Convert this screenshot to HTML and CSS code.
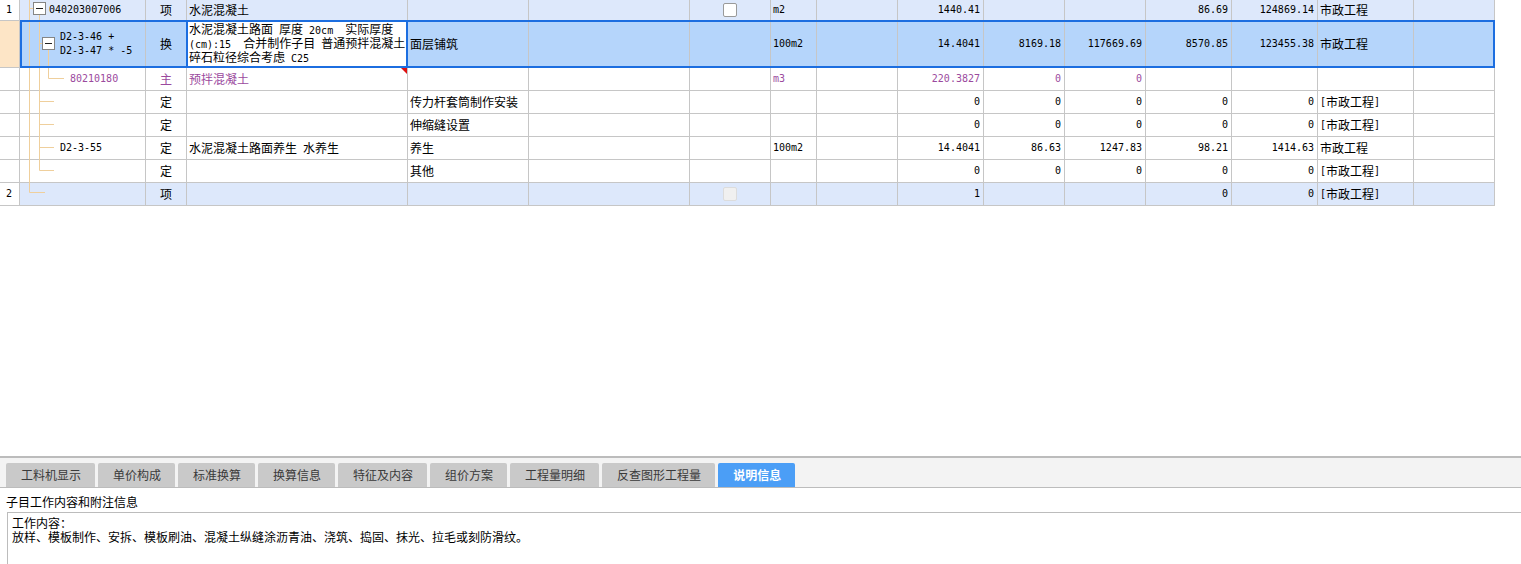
FILE: index.html
```html
<!DOCTYPE html>
<html lang="zh-CN">
<head>
<meta charset="utf-8">
<title>分部分项</title>
<link rel="stylesheet" href="styles.css">
</head>
<body>
<div class="grid-area">
  <div class="sheet">
    <div class="row first item">
      <div class="c no m">1</div>
      <div class="c tr t0"><span class="m">040203007006</span></div>
      <div class="c ctr">项</div>
      <div class="c">水泥混凝土</div>
      <div class="c"></div>
      <div class="c"></div>
      <div class="c ctr"><span class="chk"></span></div>
      <div class="c m">m2</div>
      <div class="c"></div>
      <div class="c r m">1440.41</div>
      <div class="c"></div>
      <div class="c"></div>
      <div class="c r m">86.69</div>
      <div class="c r m">124869.14</div>
      <div class="c">市政工程</div>
      <div class="c"></div>
    </div>
    <div class="row sel">
      <div class="c no"></div>
      <div class="c tr t1"><span class="m">D2-3-46 +<br>D2-3-47 * -5</span></div>
      <div class="c ctr">换</div>
      <div class="c edit"><span class="ml">水泥混凝土路面<span class="m"> </span>厚度<span class="m"> 20cm  </span>实际厚度<br><span class="m">(cm):15  </span>合并制作子目<span class="m"> </span>普通预拌混凝土<br>碎石粒径综合考虑<span class="m"> C25</span></span></div>
      <div class="c">面层铺筑</div>
      <div class="c"></div>
      <div class="c"></div>
      <div class="c m">100m2</div>
      <div class="c"></div>
      <div class="c r m">14.4041</div>
      <div class="c r m">8169.18</div>
      <div class="c r m">117669.69</div>
      <div class="c r m">8570.85</div>
      <div class="c r m">123455.38</div>
      <div class="c">市政工程</div>
      <div class="c"></div>
    </div>
    <div class="row pur">
      <div class="c no"></div>
      <div class="c tr t2"><span class="m">80210180</span></div>
      <div class="c ctr">主</div>
      <div class="c note">预拌混凝土</div>
      <div class="c"></div>
      <div class="c"></div>
      <div class="c"></div>
      <div class="c m">m3</div>
      <div class="c"></div>
      <div class="c r m">220.3827</div>
      <div class="c r m">0</div>
      <div class="c r m">0</div>
      <div class="c"></div>
      <div class="c"></div>
      <div class="c"></div>
      <div class="c"></div>
    </div>
    <div class="row">
      <div class="c no"></div>
      <div class="c tr"></div>
      <div class="c ctr">定</div>
      <div class="c"></div>
      <div class="c">传力杆套筒制作安装</div>
      <div class="c"></div>
      <div class="c"></div>
      <div class="c"></div>
      <div class="c"></div>
      <div class="c r m">0</div>
      <div class="c r m">0</div>
      <div class="c r m">0</div>
      <div class="c r m">0</div>
      <div class="c r m">0</div>
      <div class="c"><span class="m">[</span>市政工程<span class="m">]</span></div>
      <div class="c"></div>
    </div>
    <div class="row">
      <div class="c no"></div>
      <div class="c tr"></div>
      <div class="c ctr">定</div>
      <div class="c"></div>
      <div class="c">伸缩缝设置</div>
      <div class="c"></div>
      <div class="c"></div>
      <div class="c"></div>
      <div class="c"></div>
      <div class="c r m">0</div>
      <div class="c r m">0</div>
      <div class="c r m">0</div>
      <div class="c r m">0</div>
      <div class="c r m">0</div>
      <div class="c"><span class="m">[</span>市政工程<span class="m">]</span></div>
      <div class="c"></div>
    </div>
    <div class="row">
      <div class="c no"></div>
      <div class="c tr t1"><span class="m">D2-3-55</span></div>
      <div class="c ctr">定</div>
      <div class="c">水泥混凝土路面养生<span class="m"> </span>水养生</div>
      <div class="c">养生</div>
      <div class="c"></div>
      <div class="c"></div>
      <div class="c m">100m2</div>
      <div class="c"></div>
      <div class="c r m">14.4041</div>
      <div class="c r m">86.63</div>
      <div class="c r m">1247.83</div>
      <div class="c r m">98.21</div>
      <div class="c r m">1414.63</div>
      <div class="c">市政工程</div>
      <div class="c"></div>
    </div>
    <div class="row">
      <div class="c no"></div>
      <div class="c tr"></div>
      <div class="c ctr">定</div>
      <div class="c"></div>
      <div class="c">其他</div>
      <div class="c"></div>
      <div class="c"></div>
      <div class="c"></div>
      <div class="c"></div>
      <div class="c r m">0</div>
      <div class="c r m">0</div>
      <div class="c r m">0</div>
      <div class="c r m">0</div>
      <div class="c r m">0</div>
      <div class="c"><span class="m">[</span>市政工程<span class="m">]</span></div>
      <div class="c"></div>
    </div>
    <div class="row item">
      <div class="c no m">2</div>
      <div class="c tr"></div>
      <div class="c ctr">项</div>
      <div class="c"></div>
      <div class="c"></div>
      <div class="c"></div>
      <div class="c ctr"><span class="chk dis"></span></div>
      <div class="c"></div>
      <div class="c"></div>
      <div class="c r m">1</div>
      <div class="c"></div>
      <div class="c"></div>
      <div class="c r m">0</div>
      <div class="c r m">0</div>
      <div class="c"><span class="m">[</span>市政工程<span class="m">]</span></div>
      <div class="c"></div>
    </div>

    <svg class="tree" width="146" height="206" viewBox="0 0 146 206">
      <g stroke="#efcf9c" stroke-width="1" fill="none">
        <path d="M29.5 0 V192.5 H45"/>
        <path d="M29.5 8.5 H33"/>
        <path d="M39.5 15 V170.5 H54"/>
        <path d="M39.5 101.5 H54 M39.5 124.5 H54 M39.5 147.5 H54"/>
        <path d="M39.5 43.5 H42"/>
        <path d="M48.5 50 V78.5 H64"/>
      </g>
      <g stroke="#858585" fill="#fff">
        <rect x="33.5" y="2.5" width="12" height="12"/>
        <rect x="42.5" y="37.5" width="12" height="12"/>
      </g>
      <g stroke="#222" fill="none">
        <path d="M36 8.5 H43"/>
        <path d="M45 43.5 H52"/>
      </g>
    </svg>
    <div class="sel-frame"></div>
    <div class="edit-frame"></div>
  </div>
</div>

<div class="panel">
  <div class="tabs">
    <div class="tab">工料机显示</div>
    <div class="tab">单价构成</div>
    <div class="tab">标准换算</div>
    <div class="tab">换算信息</div>
    <div class="tab">特征及内容</div>
    <div class="tab">组价方案</div>
    <div class="tab">工程量明细</div>
    <div class="tab">反查图形工程量</div>
    <div class="tab on">说明信息</div>
  </div>
  <div class="caption">子目工作内容和附注信息</div>
  <div class="desc">工作内容：<br>放样、模板制作、安拆、模板刷油、混凝土纵缝涂沥青油、浇筑、捣固、抹光、拉毛或刻防滑纹。</div>
</div>
</body>
</html>
```

FILE: styles.css
```css
* {
  box-sizing: border-box;
}

html,
body {
  margin: 0;
  padding: 0;
}

body {
  width: 1521px;
  height: 564px;
  overflow: hidden;
  display: flex;
  flex-direction: column;
  background: #fff;
  color: #000;
  font-family: "Noto Sans CJK SC", sans-serif;
  font-size: 12px;
  line-height: 14px;
}

.grid-area {
  flex: 1;
  min-height: 0;
}

.sheet {
  position: relative;
  width: 1495px;
}

.row {
  display: grid;
  grid-template-columns: 20px 126px 41px 221px 121px 161px 81px 46px 81px 86px 81px 81px 86px 86px 96px 81px;
  height: 23px;
}

.row.first {
  height: 21px;
}

.row.sel {
  height: 47px;
}

.c {
  display: flex;
  align-items: center;
  padding: 0 2px;
  border-right: 1px solid #c6c6c6;
  border-bottom: 1px solid #c6c6c6;
  white-space: pre;
  overflow: hidden;
  line-height: 14px;
}

.row.item .c {
  background: #dde8fb;
}

.row.sel .c {
  background: #b5d5fb;
}

.row .c.no {
  background: #fff;
  padding-left: 6px;
}

.row.sel .c.no {
  background: #fde5c6;
}

.row.sel .c.edit {
  background: #fff;
  padding-top: 1px;
  align-items: flex-start;
}

.c.ctr {
  justify-content: center;
}

.c.r {
  justify-content: flex-end;
  padding-right: 3px;
}

.c.t0 {
  padding-left: 29px;
}

.c.t1 {
  padding-left: 40px;
}

.c.t2 {
  padding-left: 50px;
}

.m {
  font-family: "DejaVu Sans Mono", monospace;
  font-size: 10px;
}

.ml {
  display: block;
  line-height: 14px;
  height: 42px;
}

.ml .m,
.c > .m + *,
.c span.m {
  line-height: 10px;
}

.c.tr > .m {
  line-height: 14px;
}

.row.pur .c {
  color: #9b4a9e;
}

.c.note {
  position: relative;
}

.c.note::after {
  content: "";
  position: absolute;
  top: 0;
  right: 0;
  width: 0;
  height: 0;
  border-top: 6px solid #e01010;
  border-left: 6px solid transparent;
}

.chk {
  display: block;
  width: 14px;
  height: 14px;
  border: 1px solid #9a9a9a;
  border-radius: 2px;
  background: #fff;
}

.chk.dis {
  border-color: #dcdcdc;
  background: #f0f0f0;
}

.tree {
  position: absolute;
  left: 0;
  top: 0;
  pointer-events: none;
}

.sel-frame {
  position: absolute;
  left: 20px;
  top: 20px;
  width: 1475px;
  height: 48px;
  border: 2px solid #1c6ee0;
  pointer-events: none;
}

.edit-frame {
  position: absolute;
  left: 186px;
  top: 20px;
  width: 222px;
  height: 48px;
  border: 2px solid #1c6ee0;
  pointer-events: none;
}

.panel {
  height: 108px;
  display: flex;
  flex-direction: column;
  border-top: 2px solid #bcbcbc;
}

.tabs {
  height: 30px;
  display: flex;
  align-items: flex-end;
  gap: 3px;
  padding-left: 6px;
  background: #f3f3f3;
  border-bottom: 1px solid #bcbcbc;
}

.tab {
  height: 24px;
  display: flex;
  align-items: center;
  padding: 0 14px 0 15px;
  background: #c9c9c9;
  color: #3a3a3a;
  border-radius: 2px 2px 0 0;
  white-space: nowrap;
}

.tab.on {
  background: #4b9ef6;
  color: #fff;
  font-weight: bold;
}

.caption {
  height: 24px;
  display: flex;
  align-items: center;
  padding: 3px 6px 0;
}

.desc {
  flex: 1;
  margin-left: 7px;
  padding: 3px 4px;
  border-top: 1px solid #bcbcbc;
  border-left: 1px solid #bcbcbc;
  line-height: 14px;
}
```
